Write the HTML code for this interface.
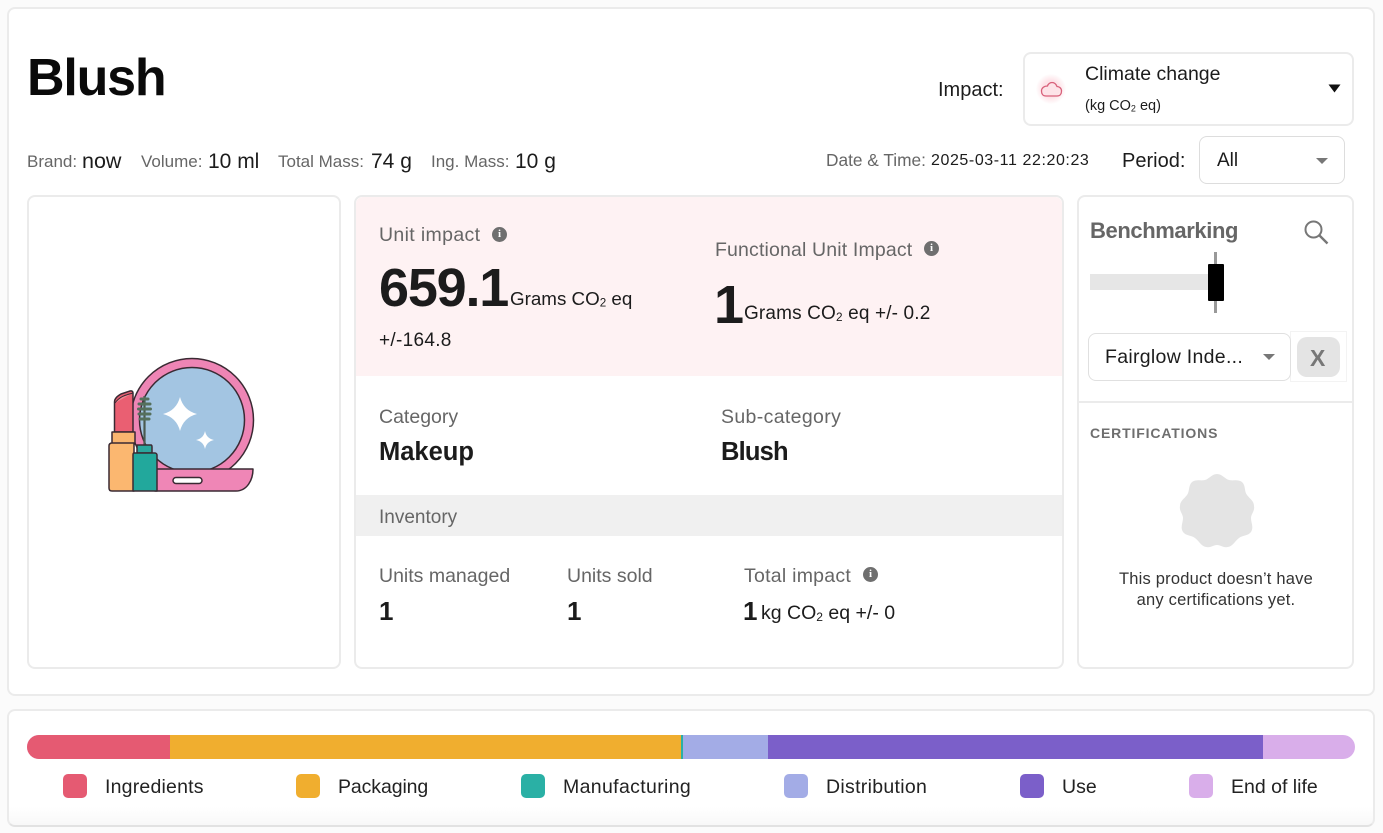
<!DOCTYPE html>
<html><head><meta charset="utf-8"><style>
html,body{margin:0;padding:0;width:1383px;height:833px;overflow:hidden;background:#fbfbfb;font-family:"Liberation Sans",sans-serif;color:#1c1c1c}
.b{position:absolute;box-sizing:border-box;background:#fff;border:2px solid #ebebeb;border-radius:8px}
.r{position:absolute}
.t{position:absolute;white-space:nowrap;line-height:1}
.g{color:#666}
.i{position:absolute;width:15px;height:15px;border-radius:50%;background:#6f6f6f;color:#fff;font:bold 11px/15px "Liberation Serif",serif;text-align:center}
.sw{position:absolute;top:774px;width:24px;height:24px;border-radius:5px}
.lg{top:778px;font-size:19.5px;color:#222}
sub{font-size:.62em;vertical-align:-0.15em;line-height:0}
</style></head><body>
<div class="b" style="left:7px;top:7px;width:1368px;height:689px"></div>
<div class="b" style="left:7px;top:709px;width:1368px;height:118px;border-bottom-color:#e2e2e2;background:linear-gradient(#fff 84%,#f8f8f8)"></div>

<div class="t" style="left:27px;top:52px;font-size:52px;font-weight:700;color:#0a0a0a;letter-spacing:-1.2px">Blush</div>

<div class="t g" style="left:27px;top:153px;font-size:17px">Brand:</div>
<div class="t" style="left:82px;top:151px;font-size:21.5px">now</div>
<div class="t g" style="left:141px;top:153px;font-size:17px">Volume:</div>
<div class="t" style="left:208px;top:151px;font-size:21px">10 ml</div>
<div class="t g" style="left:278px;top:153px;font-size:17px">Total Mass:</div>
<div class="t" style="left:371px;top:151px;font-size:21px">74 g</div>
<div class="t g" style="left:431px;top:153px;font-size:17px">Ing. Mass:</div>
<div class="t" style="left:515px;top:151px;font-size:21px">10 g</div>

<div class="t g" style="left:826px;top:152px;font-size:17.300px">Date &amp; Time:</div>
<div class="t" style="left:931px;top:153px;font-size:16px;letter-spacing:.58px">2025-03-11 22:20:23</div>
<div class="t" style="left:1122px;top:151px;font-size:20px">Period:</div>
<div class="b" style="left:1199px;top:136px;width:146px;height:48px;border-width:1.5px;border-color:#ddd"></div>
<div class="t" style="left:1217px;top:151px;font-size:19px">All</div>
<svg class="r" style="left:1315px;top:157px" width="14" height="8"><path d="M1 1H13L7 7Z" fill="#777"/></svg>

<div class="t" style="left:938px;top:80px;font-size:20px">Impact:</div>
<div class="b" style="left:1023px;top:52px;width:331px;height:74px"></div>
<div class="r" style="left:1036px;top:74px;width:30px;height:30px;border-radius:50%;background:radial-gradient(#fde3e8 40%,#fff 72%)"></div>
<svg class="r" style="left:1040px;top:80px" width="23" height="18" fill="none" stroke="#d8607a" stroke-width="1.300"><path d="M6 16H17C20 16 21.500 14 21.500 11C21.500 8 19 6.500 17 6.500C16 4 14 2.500 12 2.500C10 2.500 8 4 7.500 6C4 6 1.500 8 1.500 11C1.500 14 3 16 6 16Z"/></svg>
<div class="t" style="left:1085px;top:65px;font-size:19.500px">Climate change</div>
<div class="t" style="left:1085px;top:99px;font-size:14.500px">(kg CO<sub>2</sub> eq)</div>
<svg class="r" style="left:1328px;top:84px" width="13" height="9"><path d="M0.500 0.500H12.500L6.500 8.500Z" fill="#111"/></svg>

<div class="b" style="left:27px;top:195px;width:314px;height:474px"></div>
<svg class="r" style="left:100px;top:350px" width="165" height="150" viewBox="100 350 165 150" stroke="#3a2a33" stroke-width="1.500" stroke-linejoin="round">
<circle cx="192" cy="420" r="61.500" fill="#ee85b5"/>
<circle cx="192" cy="420" r="52.500" fill="#a3c5e2"/>
<path d="M180 397Q183.500 410.500 197 414Q183.500 417.500 180 431Q176.500 417.500 163 414Q176.500 410.500 180 397Z" fill="#fff" stroke="none"/>
<path d="M205 431Q206.500 438.500 214 440Q206.500 441.500 205 449Q203.500 441.500 196 440Q203.500 438.500 205 431Z" fill="#fff" stroke="none"/>
<path d="M155 469H253C253 480 247 491 236 491H155Z" fill="#ef86b6"/>
<rect x="173" y="477.500" width="29" height="6" rx="3" fill="#fff"/>
<path d="M114.500 432V402C114.500 398 118 396 121 394L130 391C132 390.500 133 391.500 133 393V432Z" fill="#ea5f72"/>
<path d="M115 403C120 396 126 395 133 393" fill="#f08a94" stroke-width="1"/>
<rect x="112" y="432" width="23" height="12" fill="#f9b56f"/>
<path d="M133 443H112C110 443 109 444 109 446V488C109 490 110 491 112 491H134V443Z" fill="#fbb770"/>
<path d="M144.500 446V396" stroke="#4a5a50" stroke-width="2.200"/>
<g stroke="#55705c" stroke-width="3" stroke-linecap="round">
<path d="M141 399H148M139 404H150M138.500 409H150.500M139 414H150M140 419H149"/>
</g>
<path d="M137 445H151C152 445 152 446 152 447V453H137V447C137 446 137 445 137 445Z" fill="#2aa79d"/>
<path d="M134 453H155C156 453 157 454 157 455V491H133V455C133 454 133 453 134 453Z" fill="#22a89c"/>
</svg>

<div class="b" style="left:354px;top:195px;width:710px;height:474px"></div>
<div class="r" style="left:356px;top:197px;width:706px;height:179px;background:#fef2f3;border-radius:7px 7px 0 0"></div>
<div class="t g" style="left:379px;top:226px;font-size:19.5px;letter-spacing:.35px">Unit impact</div>
<div class="i" style="left:492px;top:227px">i</div>
<div class="t" style="left:379px;top:261px;font-size:54px;font-weight:700;letter-spacing:-1.2px">659.1</div>
<div class="t" style="left:510px;top:290px;font-size:18.8px">Grams CO<sub>2</sub> eq</div>
<div class="t" style="left:379px;top:331px;font-size:19px;letter-spacing:.3px">+/-164.8</div>
<div class="t g" style="left:715px;top:241px;font-size:19.5px;letter-spacing:.15px">Functional Unit Impact</div>
<div class="i" style="left:924px;top:241px">i</div>
<div class="t" style="left:714px;top:278px;font-size:54px;font-weight:700">1</div>
<div class="t" style="left:744px;top:304px;font-size:19px;letter-spacing:.15px">Grams CO<sub>2</sub> eq +/- 0.2</div>

<div class="t g" style="left:379px;top:408px;font-size:19.5px">Category</div>
<div class="t" style="left:379px;top:440px;font-size:25.5px;font-weight:700">Makeup</div>
<div class="t g" style="left:721px;top:408px;font-size:19.5px;letter-spacing:.35px">Sub-category</div>
<div class="t" style="left:721px;top:440px;font-size:25.5px;font-weight:700;letter-spacing:-.8px">Blush</div>

<div class="r" style="left:356px;top:495px;width:706px;height:41px;background:#f0f0f0"></div>
<div class="t g" style="left:379px;top:508px;font-size:19px">Inventory</div>

<div class="t g" style="left:379px;top:567px;font-size:19.5px">Units managed</div>
<div class="t" style="left:379px;top:598px;font-size:26px;font-weight:700">1</div>
<div class="t g" style="left:567px;top:567px;font-size:19.5px">Units sold</div>
<div class="t" style="left:567px;top:598px;font-size:26px;font-weight:700">1</div>
<div class="t g" style="left:744px;top:567px;font-size:19.5px;letter-spacing:.25px">Total impact</div>
<div class="i" style="left:863px;top:567px">i</div>
<div class="t" style="left:743px;top:598px;font-size:26px;font-weight:700">1</div>
<div class="t" style="left:761px;top:604px;font-size:19.500px">kg CO<sub>2</sub> eq +/- 0</div>

<div class="b" style="left:1077px;top:195px;width:277px;height:474px"></div>
<div class="t" style="left:1090px;top:220px;font-size:22px;font-weight:700;color:#666;letter-spacing:-.4px">Benchmarking</div>
<svg class="r" style="left:1302px;top:218px" width="28" height="28" fill="none" stroke="#777" stroke-width="2"><circle cx="11.500" cy="11.500" r="8"/><path d="M17.500 17.500L25.500 25.500" stroke-width="2.400"/></svg>
<div class="r" style="left:1090px;top:274px;width:120px;height:16px;background:#e6e6e6"></div>
<div class="r" style="left:1214px;top:252px;width:3px;height:61px;background:#999"></div>
<div class="r" style="left:1208px;top:264px;width:16px;height:37px;background:#000;border-radius:1px"></div>
<div class="r" style="left:1290px;top:331px;width:57px;height:51px;border:1px solid #f3f3f3;box-sizing:border-box"></div>
<div class="b" style="left:1088px;top:333px;width:203px;height:48px;border-width:1.5px;border-color:#e0e0e0"></div>
<div class="t" style="left:1105px;top:348px;font-size:19.5px;letter-spacing:.3px">Fairglow Inde...</div>
<svg class="r" style="left:1262px;top:353px" width="14" height="8"><path d="M1 1H13L7 7Z" fill="#777"/></svg>
<div class="r" style="left:1297px;top:337px;width:43px;height:40px;background:#e4e4e4;border-radius:10px"></div>
<div class="t" style="left:1310px;top:347px;font-size:23px;font-weight:700;color:#777">X</div>
<div class="r" style="left:1079px;top:401px;width:273px;height:2px;background:#ebebeb"></div>
<div class="t" style="left:1090px;top:426px;font-size:14px;font-weight:700;color:#6e6e6e;letter-spacing:.85px">CERTIFICATIONS</div>
<svg class="r" style="left:1178px;top:472px" width="78" height="78" viewBox="0 0 78 78"><path d="M39 2C44 2 47 7 51 8C56 9 60 7 64 10C68 14 66 19 69 23C72 27 76 29 76 34C77 39 73 42 73 46C73 51 76 55 73 60C70 64 65 63 61 66C57 69 55 74 50 75C45 76 43 73 39 73C35 73 33 76 28 75C23 74 21 69 17 66C13 63 8 64 5 60C2 55 5 51 5 46C5 42 1 39 2 34C2 29 6 27 9 23C12 19 10 14 14 10C18 7 22 9 27 8C31 7 34 2 39 2Z" fill="#e4e4e4"/></svg>
<div class="t" style="left:1090px;top:571px;width:252px;text-align:center;font-size:16.500px;letter-spacing:.2px;color:#333">This product doesn’t have</div>
<div class="t" style="left:1090px;top:592px;width:252px;text-align:center;font-size:16.500px;letter-spacing:.2px;color:#333">any certifications yet.</div>

<div class="r" style="left:27px;top:735px;width:1328px;height:24px;border-radius:12px;overflow:hidden;background:#d9aeea">
<div class="r" style="left:0;top:0;width:143px;height:24px;background:#e55a72"></div>
<div class="r" style="left:143px;top:0;width:511px;height:24px;background:#f0ae2f"></div>
<div class="r" style="left:654px;top:0;width:2px;height:24px;background:#2ab0a5"></div>
<div class="r" style="left:656px;top:0;width:85px;height:24px;background:#a3ace6"></div>
<div class="r" style="left:741px;top:0;width:495px;height:24px;background:#7b5fc9"></div>
</div>
<div class="sw" style="left:63px;background:#e55a72"></div><div class="t lg" style="left:105px;letter-spacing:.2px">Ingredients</div>
<div class="sw" style="left:296px;background:#f0ae2f"></div><div class="t lg" style="left:338px;letter-spacing:-.1px">Packaging</div>
<div class="sw" style="left:521px;background:#2ab0a5"></div><div class="t lg" style="left:563px;letter-spacing:.35px">Manufacturing</div>
<div class="sw" style="left:784px;background:#a3ace6"></div><div class="t lg" style="left:826px;letter-spacing:.3px">Distribution</div>
<div class="sw" style="left:1020px;background:#7b5fc9"></div><div class="t lg" style="left:1062px">Use</div>
<div class="sw" style="left:1189px;background:#d9aeea"></div><div class="t lg" style="left:1231px">End of life</div>
</body></html>
